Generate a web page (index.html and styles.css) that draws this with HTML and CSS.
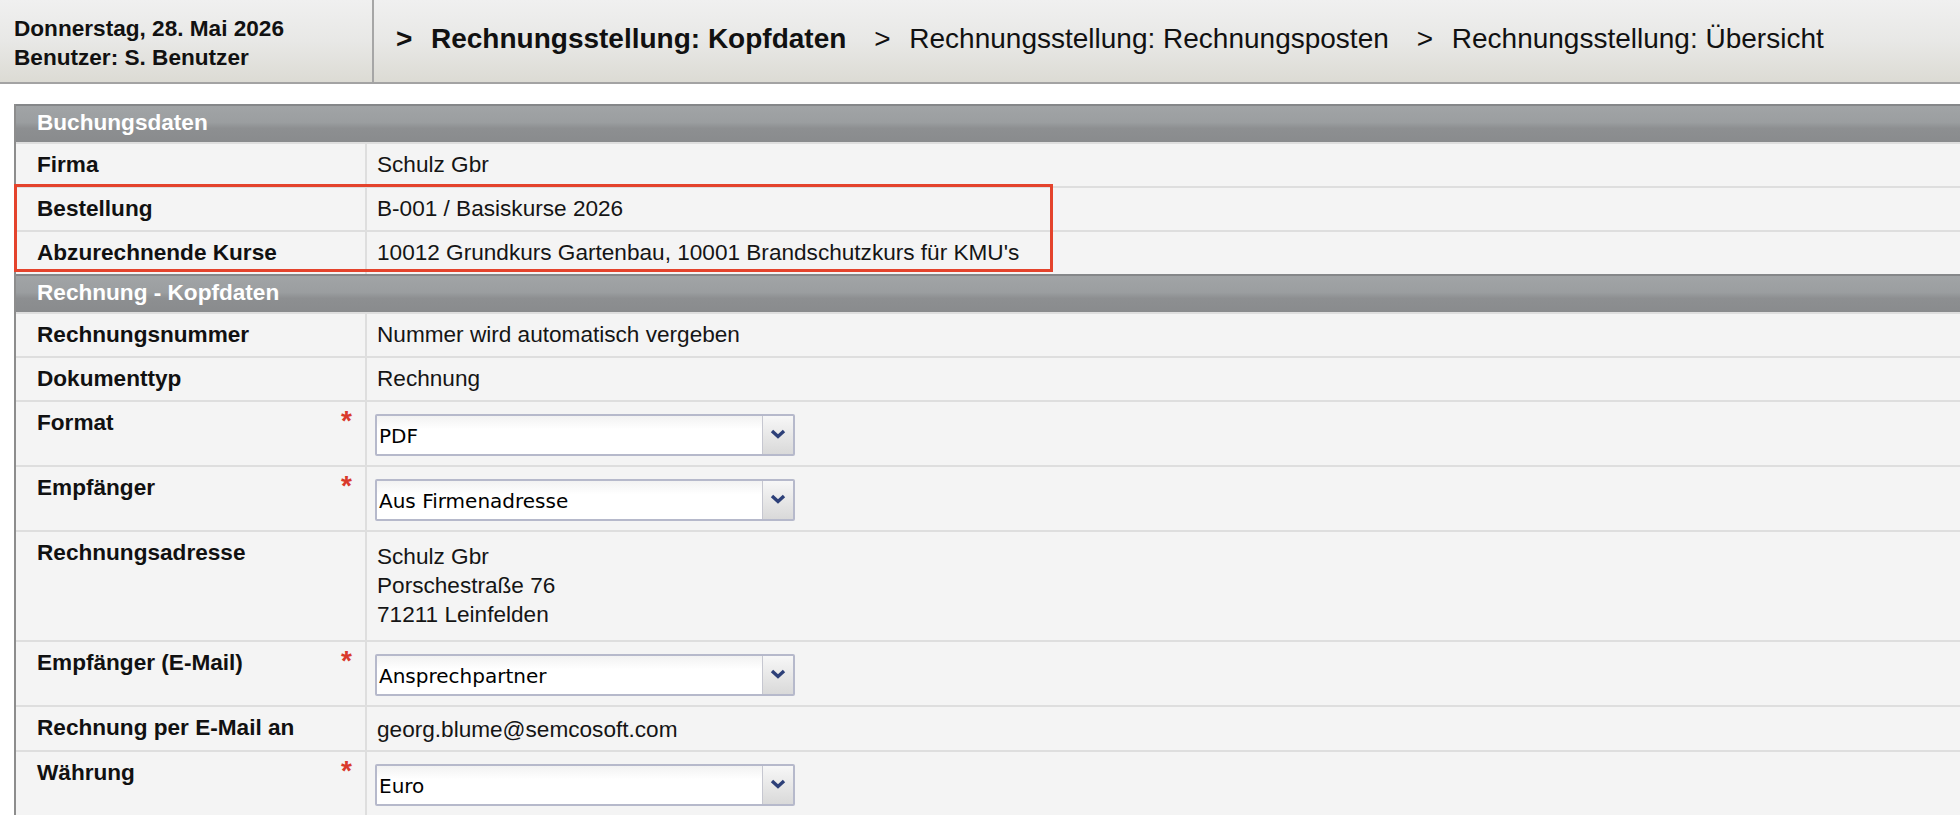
FILE: index.html
```html
<!DOCTYPE html>
<html lang="de">
<head>
    <meta charset="UTF-8">
    <meta name="viewport" content="width=device-width, initial-scale=1.0">
    <title>Rechnungsstellung: Kopfdaten</title>
    <link rel="stylesheet" href="styles.css">
</head>
<body>
    <!-- Kopfleiste mit Datum, Benutzer und Schritten -->
    <div class="topbar">
        <div class="session">
            <div>Donnerstag, 28. Mai 2026</div>
            <div>Benutzer: S. Benutzer</div>
        </div>
        <ol class="steps">
            <li class="step active"><span class="sep">&gt;</span>Rechnungsstellung: Kopfdaten</li>
            <li class="step"><span class="sep">&gt;</span>Rechnungsstellung: Rechnungsposten</li>
            <li class="step"><span class="sep">&gt;</span>Rechnungsstellung: Übersicht</li>
        </ol>
    </div>

    <div class="content">
        <div class="sheet">
            <!-- Buchungsdaten -->
            <div class="section-title">Buchungsdaten</div>
            <div class="row">
                <div class="label">Firma</div>
                <div class="value">Schulz Gbr</div>
            </div>
            <div class="marked">
                <div class="row">
                    <div class="label">Bestellung</div>
                    <div class="value">B-001 / Basiskurse 2026</div>
                </div>
                <div class="row">
                    <div class="label">Abzurechnende Kurse</div>
                    <div class="value">10012 Grundkurs Gartenbau, 10001 Brandschutzkurs für KMU's</div>
                </div>
            </div>

            <!-- Rechnung - Kopfdaten -->
            <div class="section-title">Rechnung - Kopfdaten</div>
            <div class="row">
                <div class="label">Rechnungsnummer</div>
                <div class="value">Nummer wird automatisch vergeben</div>
            </div>
            <div class="row">
                <div class="label">Dokumenttyp</div>
                <div class="value">Rechnung</div>
            </div>
            <div class="row">
                <div class="label">Format <span class="req">*</span></div>
                <div class="value field">
                    <div class="select">
                        <span class="select-text">PDF</span>
                        <span class="select-btn"><svg width="16" height="10" viewBox="0 0 16 10"><path d="M2 2 L8 7.5 L14 2" fill="none" stroke="#2d4079" stroke-width="3.4"/></svg></span>
                    </div>
                </div>
            </div>
            <div class="row">
                <div class="label">Empfänger <span class="req">*</span></div>
                <div class="value field">
                    <div class="select">
                        <span class="select-text">Aus Firmenadresse</span>
                        <span class="select-btn"><svg width="16" height="10" viewBox="0 0 16 10"><path d="M2 2 L8 7.5 L14 2" fill="none" stroke="#2d4079" stroke-width="3.4"/></svg></span>
                    </div>
                </div>
            </div>
            <div class="row">
                <div class="label">Rechnungsadresse</div>
                <div class="value address">
                    Schulz Gbr<br>
                    Porschestraße 76<br>
                    71211 Leinfelden
                </div>
            </div>
            <div class="row">
                <div class="label">Empfänger (E-Mail) <span class="req">*</span></div>
                <div class="value field">
                    <div class="select">
                        <span class="select-text">Ansprechpartner</span>
                        <span class="select-btn"><svg width="16" height="10" viewBox="0 0 16 10"><path d="M2 2 L8 7.5 L14 2" fill="none" stroke="#2d4079" stroke-width="3.4"/></svg></span>
                    </div>
                </div>
            </div>
            <div class="row">
                <div class="label">Rechnung per E-Mail an</div>
                <div class="value mail">georg.blume@semcosoft.com</div>
            </div>
            <div class="row">
                <div class="label">Währung <span class="req">*</span></div>
                <div class="value field">
                    <div class="select">
                        <span class="select-text">Euro</span>
                        <span class="select-btn"><svg width="16" height="10" viewBox="0 0 16 10"><path d="M2 2 L8 7.5 L14 2" fill="none" stroke="#2d4079" stroke-width="3.4"/></svg></span>
                    </div>
                </div>
            </div>
        </div>
    </div>
</body>
</html>
```

FILE: styles.css
```css
body {
    margin: 0;
    font-family: "Liberation Sans", Arial, sans-serif;
    font-size: 22.6px;
    line-height: 29px;
    color: #111;
    background-color: #fff;
    overflow: hidden;
}

/* Kopfleiste */
.topbar {
    display: flex;
    height: 82px;
    background: linear-gradient(to bottom, #f0f0f0 0%, #e8e8e6 50%, #dcdbd4 100%);
    border-bottom: 2px solid #a3a3a3;
}

.session {
    width: 374px;
    padding: 14px 0 0 14px;
    box-sizing: border-box;
    border-right: 2px solid #a6a6a6;
    font-weight: bold;
}

.steps {
    display: flex;
    gap: 28px;
    margin: 0;
    padding: 22px 0 0 22px;
    list-style: none;
    font-size: 28px;
    line-height: 34px;
}

.step {
    display: flex;
}

.step .sep {
    display: inline-block;
    width: 35px;
}

.step.active {
    font-weight: bold;
}

/* Datenblatt */
.content {
    padding: 20px 0 0 14px;
}

.sheet {
    width: 2000px;
    border-left: 2px solid #8d8d8d;
}

.section-title {
    height: 38px;
    padding: 2px 0 0 21px;
    box-sizing: border-box;
    border-top: 2px solid #858789;
    background: linear-gradient(to bottom, #a1a4a6 0%, #9b9ea0 45%, #8d8f91 62%, #898b8d 100%);
    color: #fff;
    font-weight: bold;
}

.row {
    display: grid;
    grid-template-columns: 349px 1fr;
    border-top: 2px solid #dedede;
    background-color: #f4f4f4;
}

.label {
    display: flex;
    justify-content: space-between;
    align-items: flex-start;
    padding: 6px 13px 7px 21px;
    font-weight: bold;
}

.value {
    border-left: 2px solid #dedede;
    padding: 6px 10px 7px 10px;
    color: #151515;
}

.value.field {
    padding: 12px 8px 9px 8px;
}

.value.address {
    padding-top: 10px;
    padding-bottom: 11px;
}

.value.mail {
    padding-top: 8px;
    padding-bottom: 6px;
}

.req {
    color: #d93a2b;
    font-size: 28px;
    line-height: 26px;
}

/* markierte Zeilen */
.marked {
    position: relative;
}

.marked::after {
    content: "";
    position: absolute;
    left: -2px;
    top: -2px;
    bottom: 2px;
    width: 1039px;
    border: 3px solid #e4432c;
    box-sizing: border-box;
    pointer-events: none;
}

/* Auswahlfeld */
.select {
    display: flex;
    width: 420px;
    height: 42px;
    box-sizing: border-box;
    border: 2px solid #b6b9cb;
    border-radius: 2px;
    background: linear-gradient(to bottom, #f2f2f2 0%, #fff 35%);
}

.select-text {
    flex: 1;
    padding-left: 2px;
    font-family: "DejaVu Sans", sans-serif;
    font-size: 20px;
    line-height: 40px;
    color: #000;
}

.select-btn {
    display: flex;
    align-items: center;
    justify-content: center;
    width: 31px;
    padding-bottom: 3px;
    box-sizing: border-box;
    border-left: 1px solid #c6c7d0;
    background: linear-gradient(to bottom, #f7f7f7 0%, #d9d9d9 100%);
}
```
